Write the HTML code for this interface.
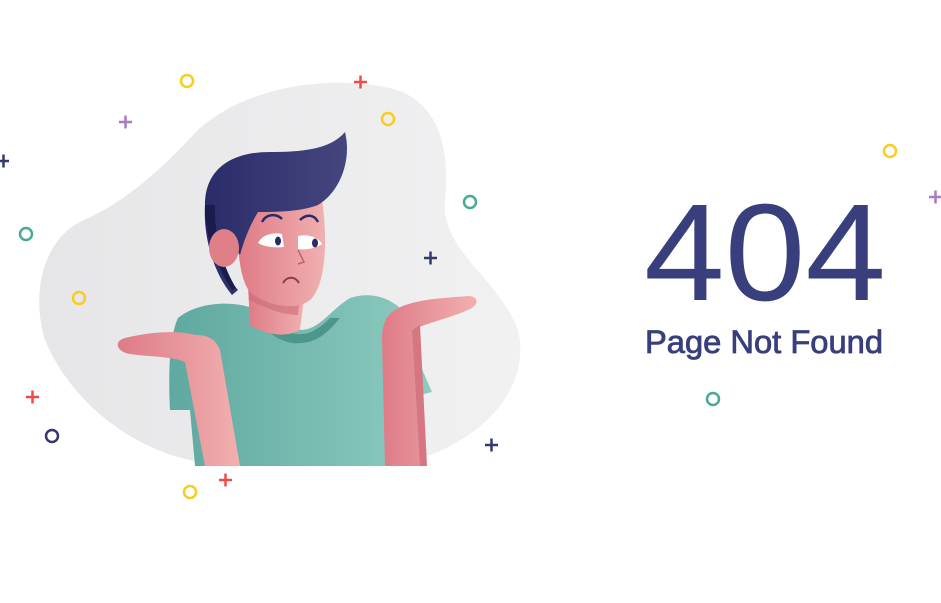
<!DOCTYPE html>
<html><head><meta charset="utf-8"><style>
html,body{margin:0;padding:0;background:#fff;width:941px;height:603px;overflow:hidden}
svg{display:block}
</style></head><body>
<svg width="941" height="603" viewBox="0 0 941 603" xmlns="http://www.w3.org/2000/svg">
<defs>
<linearGradient id="bl" x1="0" x2="1"><stop offset="0" stop-color="#e6e5e7"/><stop offset="1" stop-color="#f1f1f2"/></linearGradient>
<linearGradient id="sh" x1="0" x2="1"><stop offset="0" stop-color="#5fa9a0"/><stop offset="1" stop-color="#8ecbc0"/></linearGradient>
<linearGradient id="sk" x1="0" x2="1"><stop offset="0" stop-color="#de7b87"/><stop offset="1" stop-color="#f1b0b0"/></linearGradient>
<linearGradient id="hr" x1="0" x2="1"><stop offset="0" stop-color="#2a2c6a"/><stop offset="1" stop-color="#45467e"/></linearGradient>
</defs>
<path d="M200,128 C250,85 330,75 390,88 C440,100 450,150 445,200 C440,250 500,280 518,330 C530,380 495,430 430,455 C360,470 260,468 200,462 C130,450 70,400 45,340 C30,290 45,240 80,222 C130,200 165,165 200,128 Z" fill="url(#bl)"/>
<!-- shirt -->
<path d="M178,318 C200,300 240,300 262,312 L300,330 C320,330 330,310 350,298 C375,290 395,300 410,318 L418,360 L432,392 L420,395 L420,466 L195,466 L190,410 L170,410 C168,370 170,335 178,318 Z" fill="url(#sh)"/>
<path d="M255,320 C270,335 285,345 300,343 C318,343 330,330 340,318 L330,318 C318,330 308,335 298,334 C285,333 272,325 262,318 Z" fill="#4e968c"/>
<!-- neck -->
<path d="M248,285 L250,325 C265,335 285,338 300,330 L305,290 Z" fill="url(#sk)"/>
<path d="M248,285 L300,300 L298,315 C280,315 260,305 249,300 Z" fill="#c96a7a" opacity=".6"/>
<!-- head -->
<path d="M238,200 L322,200 C328,240 326,285 310,300 C295,312 265,305 250,292 C240,280 236,250 238,200 Z" fill="url(#sk)"/>
<!-- hair -->
<path d="M205,205 C205,170 230,152 270,152 C300,152 330,150 345,132 C352,160 340,192 318,205 C300,212 275,212 258,212 C250,225 244,240 240,255 L225,235 C215,250 220,270 238,290 L232,295 C215,275 203,240 205,205 Z" fill="url(#hr)"/>
<path d="M205,205 C204,230 214,262 232,290 L236,288 C222,265 214,235 215,205 Z" fill="#1a1c4c"/>
<ellipse cx="224" cy="248" rx="15" ry="19" fill="#df8089"/>
<!-- eyes -->
<path d="M258,243 C262,235 272,232 282,234 L284,247 C275,248 265,247 258,243 Z" fill="#fff"/>
<path d="M298,236 C308,234 318,237 322,244 C315,249 305,250 298,249 Z" fill="#fff"/>
<ellipse cx="278" cy="241" rx="3" ry="4.5" fill="#2a2c6a"/>
<ellipse cx="315" cy="243" rx="3" ry="4.5" fill="#2a2c6a"/>
<path d="M262,222 C266,214 276,213 282,219" stroke="#2a2c6a" stroke-width="2.5" fill="none"/>
<path d="M300,220 C306,214 314,214 318,222" stroke="#2a2c6a" stroke-width="2.5" fill="none"/>
<path d="M298,250 L304,262 L298,264" stroke="#c5606e" stroke-width="1.5" fill="none"/>
<path d="M283,283 C287,276 295,276 299,283" stroke="#8a3b4c" stroke-width="2" fill="none"/>
<!-- left arm -->
<path d="M195,335 C178,330 150,332 125,338 C112,342 118,352 130,354 C150,357 170,356 185,362 L205,466 L240,466 L220,350 C215,337 205,335 195,335 Z" fill="url(#sk)"/>
<!-- right arm -->
<path d="M395,310 C410,300 440,298 470,296 C480,298 478,306 468,310 C450,318 430,322 412,330 L420,466 L385,466 L382,340 C382,322 388,314 395,310 Z" fill="url(#sk)"/>
<path d="M412,330 L420,466 L427,466 L420,325 Z" fill="#d67683"/>
<!-- decorations -->
<g fill="none" stroke-width="2.5">
<circle cx="187" cy="81" r="6" stroke="#f7cd1f"/>
<circle cx="388" cy="119" r="6" stroke="#f7cd1f"/>
<circle cx="79" cy="298" r="6" stroke="#f7cd1f"/>
<circle cx="190" cy="492" r="6" stroke="#f7cd1f"/>
<circle cx="890" cy="151" r="6" stroke="#f7cd1f"/>
<circle cx="470" cy="202" r="6" stroke="#4aa89a"/>
<circle cx="26" cy="234" r="6" stroke="#4aa89a"/>
<circle cx="713" cy="399" r="6" stroke="#4aa89a"/>
<circle cx="52" cy="436" r="6" stroke="#34386e"/>
</g>
<g stroke-width="2.5">
<path d="M354,82h13M360.5,75.5v13" stroke="#ef4b4b"/>
<path d="M26,397h13M32.5,390.5v13" stroke="#ef4b4b"/>
<path d="M219,480h13M225.5,473.5v13" stroke="#ef4b4b"/>
<path d="M119,122h13M125.5,115.5v13" stroke="#a87cc0"/>
<path d="M929,197h13M935.5,190.5v13" stroke="#a87cc0"/>
<path d="M-3,161h12M3.5,154.5v13" stroke="#34386e"/>
<path d="M424,258h13M430.5,251.5v13" stroke="#34386e"/>
<path d="M485,445h13M491.5,438.5v13" stroke="#34386e"/>
</g>
<text x="644" y="300" font-family="Liberation Sans, sans-serif" font-size="138" fill="#383f7c" textLength="242" lengthAdjust="spacingAndGlyphs">404</text>
<text x="645" y="353" font-family="Liberation Sans, sans-serif" font-size="32" fill="#383f7c" stroke="#383f7c" stroke-width="0.8" textLength="238" lengthAdjust="spacingAndGlyphs">Page Not Found</text>
</svg>
</body></html>
